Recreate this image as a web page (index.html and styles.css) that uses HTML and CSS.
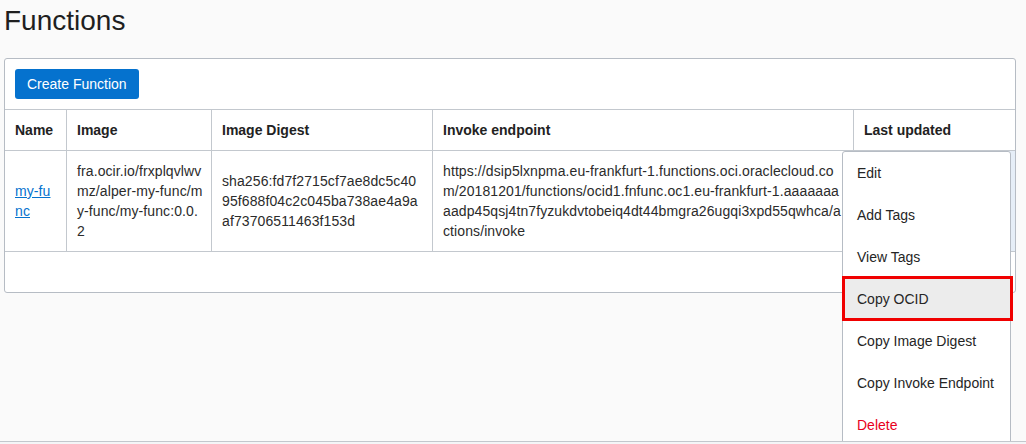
FILE: index.html
```html
<!DOCTYPE html>
<html lang="en">
<head>
<meta charset="utf-8">
<title>Functions</title>
<link rel="stylesheet" href="styles.css">
</head>
<body>
<main class="page">
  <h1 class="page-title">Functions</h1>
  <section class="panel">
    <div class="toolbar">
      <button class="btn-primary" type="button">Create Function</button>
    </div>
    <table class="grid">
      <thead>
        <tr>
          <th class="col-name">Name</th>
          <th class="col-image">Image</th>
          <th class="col-digest">Image Digest</th>
          <th class="col-endpoint">Invoke endpoint</th>
          <th class="col-updated">Last updated</th>
        </tr>
      </thead>
      <tbody>
        <tr>
          <td><a class="link" href="#">my-func</a></td>
          <td class="cell-image">fra.ocir.io/frxplqvlwvmz/alper-my-func/my-func/my-func:0.0.2</td>
          <td>sha256:fd7f2715cf7ae8dc5c4095f688f04c2c045ba738ae4a9aaf73706511463f153d</td>
          <td>https://dsip5lxnpma.eu-frankfurt-1.functions.oci.oraclecloud.com/20181201/functions/ocid1.fnfunc.oc1.eu-frankfurt-1.aaaaaaaaadp45qsj4tn7fyzukdvtobeiq4dt44bmgra26ugqi3xpd55qwhca/actions/invoke</td>
          <td class="cell-actions">
            <ul class="menu">
              <li class="menu-item">Edit</li>
              <li class="menu-item">Add Tags</li>
              <li class="menu-item">View Tags</li>
              <li class="menu-item is-active">Copy OCID</li>
              <li class="menu-item">Copy Image Digest</li>
              <li class="menu-item">Copy Invoke Endpoint</li>
              <li class="menu-item is-danger">Delete</li>
            </ul>
          </td>
        </tr>
      </tbody>
    </table>
    <div class="panel-footer"></div>
  </section>
</main>
<div class="window-edge"></div>
</body>
</html>
```
FILE: styles.css
```css
html, body {
  margin: 0;
  padding: 0;
  height: 100%;
  overflow: hidden;
  background: #fafafa;
}

body {
  font-family: "Liberation Sans", Arial, sans-serif;
  font-size: 14px;
  color: #2b2b2b;
}

.page {
  padding: 5px 10px 0 4px;
}

.page-title {
  margin: 0 0 21px 0;
  font-size: 28px;
  line-height: 32px;
  font-weight: normal;
  color: #1f1f1f;
}

.panel {
  background: #fff;
  border: 1px solid #b6bcc4;
  border-radius: 3px;
}

.toolbar {
  padding: 10px;
}

.btn-primary {
  display: block;
  font-family: inherit;
  font-size: 14px;
  line-height: 18px;
  padding: 6px 12px;
  color: #fff;
  background: #0572ce;
  border: 0;
  border-radius: 3px;
}

.grid {
  width: 100%;
  table-layout: fixed;
  border-collapse: separate;
  border-spacing: 0;
}

.grid th,
.grid td {
  box-sizing: border-box;
  padding: 10px;
  line-height: 20px;
  text-align: left;
  vertical-align: middle;
  word-break: break-all;
  border-bottom: 1px solid #c3c8ce;
  border-left: 1px solid #c3c8ce;
}

.grid td {
  letter-spacing: 0.1px;
}

.grid th:first-child,
.grid td:first-child {
  border-left: 0;
}

.grid th {
  font-weight: bold;
  color: #222;
  border-top: 1px solid #c3c8ce;
}

.col-name { width: 61px; }
.col-image { width: 145px; }
.col-digest { width: 221px; }
.col-endpoint { width: 421px; }

.grid .cell-image {
  padding-right: 8px;
}

.link {
  color: #0572ce;
  text-decoration: underline;
}

.cell-actions {
  position: relative;
  background: #e6eef7;
}

.panel-footer {
  height: 40px;
}

.menu {
  position: absolute;
  top: 0;
  left: -12px;
  z-index: 5;
  box-sizing: border-box;
  width: 169px;
  margin: 0;
  padding: 0;
  list-style: none;
  background: #fff;
  border: 1px solid #b6bcc4;
  border-radius: 3px 3px 0 0;
  font-weight: normal;
  letter-spacing: 0;
}

.menu-item {
  position: relative;
  height: 42px;
  line-height: 42px;
  padding-left: 14px;
  color: #252525;
  white-space: nowrap;
  word-break: normal;
}

.menu-item.is-active {
  background: #ececec;
}

.menu-item.is-active::after {
  content: "";
  position: absolute;
  top: -2px;
  bottom: -1px;
  left: -1px;
  right: -3px;
  border: 3px solid #f00000;
  pointer-events: none;
}

.menu-item.is-danger {
  color: #e8001c;
}

.window-edge {
  position: fixed;
  left: 0;
  right: 0;
  top: 441px;
  height: 3px;
  box-sizing: border-box;
  border-top: 1px solid #c3c7cd;
  background: #f4f5f7;
  z-index: 10;
}
```
